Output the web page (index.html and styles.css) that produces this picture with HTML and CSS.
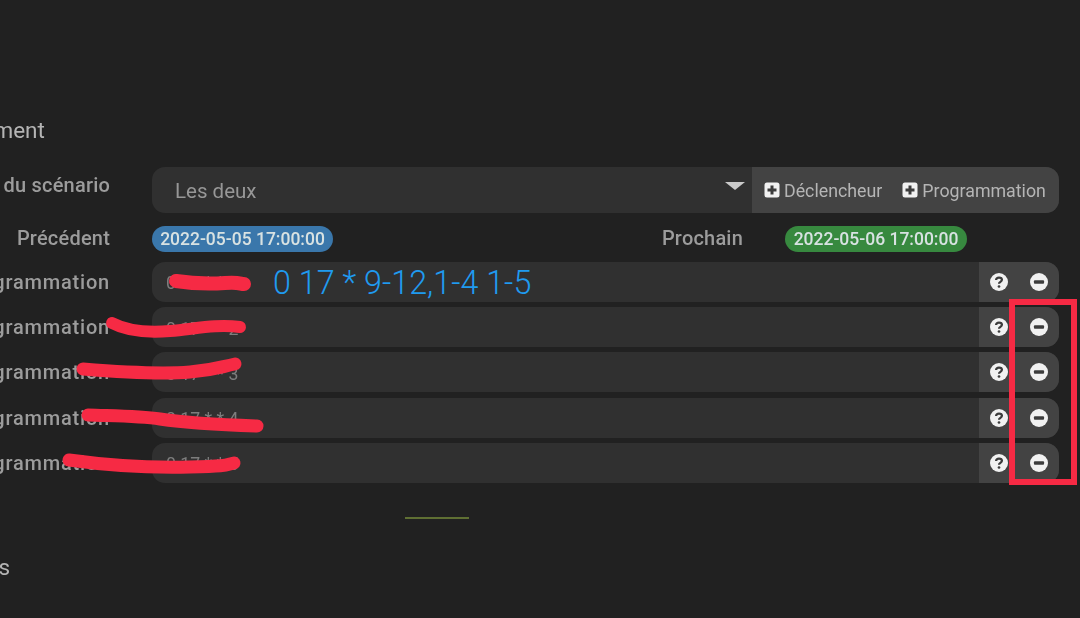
FILE: index.html
```html
<!DOCTYPE html>
<html lang="fr">
<head>
<meta charset="utf-8">
<title>Scénario</title>
<link rel="stylesheet" href="styles.css">
</head>
<body>
<main class="page">
  <h2 class="legend">Déclenchement</h2>
  <div class="form">
    <div class="row row-mode">
      <label class="label">Mode du scénario</label>
      <div class="group">
        <div class="field select"><span>Les deux</span><i class="caret"></i></div>
        <div class="addon addon-buttons">
          <span class="btn"><svg class="plus" viewBox="0 0 16 16"><rect x="0.5" y="0.5" width="15" height="15" rx="2.5" fill="#f1f1f1"/><path d="M8 3.5v9M3.5 8h9" stroke="#3c3c3c" stroke-width="3"/></svg>Déclencheur</span>
          <span class="btn"><svg class="plus" viewBox="0 0 16 16"><rect x="0.5" y="0.5" width="15" height="15" rx="2.5" fill="#f1f1f1"/><path d="M8 3.5v9M3.5 8h9" stroke="#3c3c3c" stroke-width="3"/></svg>Programmation</span>
        </div>
      </div>
    </div>
    <div class="row row-dates">
      <label class="label">Précédent</label>
      <div class="dates">
        <span class="pill pill-blue">2022-05-05 17:00:00</span>
        <span class="next-label">Prochain</span>
        <span class="pill pill-green">2022-05-06 17:00:00</span>
      </div>
    </div>
    <div class="crons">
      <div class="row row-cron">
        <label class="label">Programmation</label>
        <div class="group">
          <div class="field cron">0 17 * * 1</div>
          <div class="addon addon-icons">
            <svg class="ico" viewBox="0 0 16 16"><circle cx="8" cy="8" r="8" fill="#f1f1f1"/><path d="M5.4 6.2C5.5 4.7 6.6 4 8 4c1.500 0 2.600.8 2.600 2.100 0 1.800-2.600 1.700-2.600 3.400" fill="none" stroke="#3c3c3c" stroke-width="2"/><circle cx="8" cy="12" r="1.200" fill="#3c3c3c"/></svg>
            <svg class="ico" viewBox="0 0 16 16"><circle cx="8" cy="8" r="8" fill="#f1f1f1"/><rect x="3.500" y="6.500" width="9" height="3" rx="0.800" fill="#3c3c3c"/></svg>
          </div>
        </div>
      </div>
      <div class="row row-cron">
        <label class="label">Programmation</label>
        <div class="group">
          <div class="field cron">0 17 * * 2</div>
          <div class="addon addon-icons">
            <svg class="ico" viewBox="0 0 16 16"><circle cx="8" cy="8" r="8" fill="#f1f1f1"/><path d="M5.4 6.2C5.5 4.7 6.6 4 8 4c1.500 0 2.600.8 2.600 2.100 0 1.800-2.600 1.700-2.600 3.400" fill="none" stroke="#3c3c3c" stroke-width="2"/><circle cx="8" cy="12" r="1.200" fill="#3c3c3c"/></svg>
            <svg class="ico" viewBox="0 0 16 16"><circle cx="8" cy="8" r="8" fill="#f1f1f1"/><rect x="3.500" y="6.500" width="9" height="3" rx="0.800" fill="#3c3c3c"/></svg>
          </div>
        </div>
      </div>
      <div class="row row-cron">
        <label class="label">Programmation</label>
        <div class="group">
          <div class="field cron">0 17 * * 3</div>
          <div class="addon addon-icons">
            <svg class="ico" viewBox="0 0 16 16"><circle cx="8" cy="8" r="8" fill="#f1f1f1"/><path d="M5.4 6.2C5.5 4.7 6.6 4 8 4c1.500 0 2.600.8 2.600 2.100 0 1.800-2.600 1.700-2.600 3.400" fill="none" stroke="#3c3c3c" stroke-width="2"/><circle cx="8" cy="12" r="1.200" fill="#3c3c3c"/></svg>
            <svg class="ico" viewBox="0 0 16 16"><circle cx="8" cy="8" r="8" fill="#f1f1f1"/><rect x="3.500" y="6.500" width="9" height="3" rx="0.800" fill="#3c3c3c"/></svg>
          </div>
        </div>
      </div>
      <div class="row row-cron">
        <label class="label">Programmation</label>
        <div class="group">
          <div class="field cron">0 17 * * 4</div>
          <div class="addon addon-icons">
            <svg class="ico" viewBox="0 0 16 16"><circle cx="8" cy="8" r="8" fill="#f1f1f1"/><path d="M5.4 6.2C5.5 4.7 6.6 4 8 4c1.500 0 2.600.8 2.600 2.100 0 1.800-2.600 1.700-2.600 3.400" fill="none" stroke="#3c3c3c" stroke-width="2"/><circle cx="8" cy="12" r="1.200" fill="#3c3c3c"/></svg>
            <svg class="ico" viewBox="0 0 16 16"><circle cx="8" cy="8" r="8" fill="#f1f1f1"/><rect x="3.500" y="6.500" width="9" height="3" rx="0.800" fill="#3c3c3c"/></svg>
          </div>
        </div>
      </div>
      <div class="row row-cron">
        <label class="label">Programmation</label>
        <div class="group">
          <div class="field cron">0 17 * * 5</div>
          <div class="addon addon-icons">
            <svg class="ico" viewBox="0 0 16 16"><circle cx="8" cy="8" r="8" fill="#f1f1f1"/><path d="M5.4 6.2C5.5 4.7 6.6 4 8 4c1.500 0 2.600.8 2.600 2.100 0 1.800-2.600 1.700-2.600 3.400" fill="none" stroke="#3c3c3c" stroke-width="2"/><circle cx="8" cy="12" r="1.200" fill="#3c3c3c"/></svg>
            <svg class="ico" viewBox="0 0 16 16"><circle cx="8" cy="8" r="8" fill="#f1f1f1"/><rect x="3.500" y="6.500" width="9" height="3" rx="0.800" fill="#3c3c3c"/></svg>
          </div>
        </div>
      </div>
    </div>
  </div>
  <div class="rule-wrap"><hr class="rule"></div>
  <h2 class="legend legend-bottom">Actions</h2>
</main>
<svg class="marks" viewBox="0 0 1080 618">
  <g fill="none" stroke="#f62a44" stroke-linecap="round" stroke-linejoin="round">
    <path stroke-width="14" d="M176 281C195 284 210 284 225 283S240 284 244 284"/>
    <path stroke-width="12" d="M112 323C125 330 145 333 170 331S215 324 240 327"/>
    <path stroke-width="13" d="M83 369C120 372 165 374 190 372S220 367 235 364"/>
    <path stroke-width="13" d="M88 415C115 416 140 416 160 419S225 425 257 426"/>
    <path stroke-width="13" d="M69 460C105 465 150 468 190 467S225 465 234 463"/>
    <rect x="1012" y="302" width="62" height="180" stroke-width="6" stroke-linecap="butt" stroke-linejoin="miter"/>
  </g>
</svg>
<p class="note">0 17 * 9-12,1-4 1-5</p>
</body>
</html>
```
FILE: styles.css
```css
* { box-sizing: border-box; }
html, body {
  margin: 0;
  width: 1080px;
  height: 618px;
  overflow: hidden;
  background: #212121;
}
body {
  position: relative;
  font-family: Roboto, "Liberation Sans", sans-serif;
  color: #a8a8a8;
}
.page {
  width: 1179px;
  margin-left: -120px;
  padding-top: 117px;
  filter: blur(0.45px);
}
.legend {
  margin: 0;
  height: 27px;
  font-size: 22.500px;
  line-height: 27px;
  font-weight: 400;
  color: #b4b4b4;
  padding-left: 9px;
}
.form { margin-top: 23px; }
.row {
  display: grid;
  grid-template-columns: 230px 1fr;
  column-gap: 42px;
  align-items: center;
}
.label {
  text-align: right;
  font-size: 20px;
  letter-spacing: 0.2px;
  font-weight: 500;
  color: #9c9c9c;
  white-space: nowrap;
}
.row-mode { height: 46px; }
.row-mode .label { padding-bottom: 10px; }
.row-dates { height: 26px; margin-top: 13px; }
.row-dates .label { padding-bottom: 2px; }
.group {
  display: flex;
  height: 100%;
  border-radius: 13px;
  overflow: hidden;
  background: #303030;
}
.field {
  flex: 1;
  display: flex;
  align-items: center;
  padding-left: 23px;
  font-size: 20.500px;
  color: #979797;
}
.select { position: relative; justify-content: space-between; padding-right: 7px; }
.select span { padding-top: 1px; }
.caret {
  width: 0;
  height: 0;
  margin-bottom: 8px;
  border-left: 10px solid transparent;
  border-right: 10px solid transparent;
  border-top: 8px solid #c9c9c9;
}
.addon { background: #434343; display: flex; align-items: center; }
.addon-buttons { width: 307px; padding-left: 12px; gap: 20px; }
.btn {
  display: inline-flex;
  align-items: center;
  gap: 4px;
  font-size: 17.800px;
  color: #b5b5b5;
  white-space: nowrap;
}
.plus { width: 16px; height: 16px; flex: none; }
.dates { display: flex; align-items: center; }
.pill {
  display: inline-flex;
  align-items: center;
  justify-content: center;
  height: 26px;
  width: 181px;
  border-radius: 13px;
  font-size: 17.500px;
  font-weight: 500;
  color: #d8e2e2;
  white-space: nowrap;
}
.pill-blue { background: #3a77ab; }
.pill-green { background: #37893f; width: 182px; }
.next-label {
  width: 410px;
  margin-right: 42px;
  padding-bottom: 2px;
  text-align: right;
  font-size: 20px;
  letter-spacing: 0.2px;
  font-weight: 500;
  color: #9c9c9c;
}
.crons {
  display: flex;
  flex-direction: column;
  gap: 5.100px;
  margin-top: 9.700px;
}
.row-cron { height: 40.200px; }
.row-cron .label { letter-spacing: 0.8px; }
.cron { padding: 3px 0 0 14px; font-size: 17.700px; color: #7d7d7d; }
.addon-icons { width: 80px; padding-left: 11px; gap: 22px; }
.ico { width: 18px; height: 18px; flex: none; }
.rule-wrap { padding: 34px 0 0 525px; }
.rule {
  width: 64px;
  height: 2px;
  margin: 0;
  border: 0;
  background: #5f6f33;
}
.legend-bottom { margin-top: 35px; padding-left: 54px; }
.marks {
  position: absolute;
  left: 0;
  top: 0;
  width: 1080px;
  height: 618px;
  pointer-events: none;
}
.note {
  position: absolute;
  left: 273px;
  top: 263px;
  margin: 0;
  font-size: 32.300px;
  line-height: 40px;
  font-weight: 300;
  color: #1f9bf0;
  white-space: nowrap;
}
```
